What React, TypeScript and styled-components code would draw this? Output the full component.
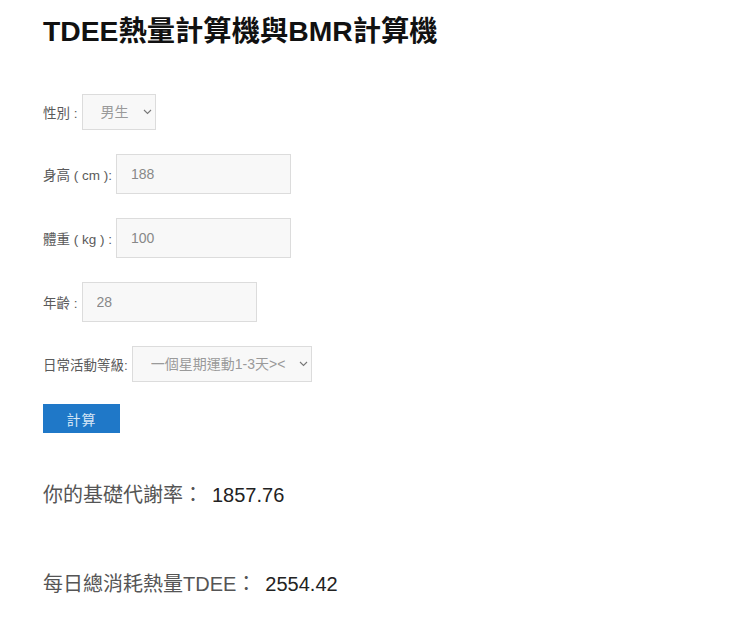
import { useState } from 'react';
import styled, { createGlobalStyle } from 'styled-components';

const GlobalStyle = createGlobalStyle`
  body {
    margin: 0;
    background: #ffffff;
    font-family: "Liberation Sans", "Noto Sans CJK TC", sans-serif;
  }
`;

const StyledPage = styled.div`
  padding: 14px 43px 0;
`;

const StyledTitle = styled.h1`
  margin: 0;
  font-size: 28.3px;
  line-height: 34px;
  font-weight: 700;
  color: #111;
  font-family: "Liberation Sans", "Noto Sans CJK TC", sans-serif;
`;

const StyledForm = styled.form`
  margin-top: 46px;
`;

const StyledRow = styled.div<{ $last?: boolean }>`
  display: flex;
  align-items: center;
  margin-bottom: ${(p) => (p.$last ? '22px' : '24px')};
`;

const StyledLabel = styled.label`
  font-size: 13.5px;
  color: #5a5a5a;
  margin-right: 4px;
  white-space: pre;
`;

const StyledInput = styled.input`
  box-sizing: border-box;
  width: 175px;
  height: 40px;
  padding: 0 14px;
  border: 1px solid #dcdcdc;
  background: #f8f8f8;
  font-size: 14px;
  color: #888;
  font-family: "Liberation Sans", "Noto Sans CJK TC", sans-serif;
  outline: none;
`;

const StyledSelectWrap = styled.span`
  position: relative;
  display: inline-block;
`;

const StyledSelect = styled.select<{ $width: number }>`
  box-sizing: border-box;
  appearance: none;
  width: ${(p) => p.$width}px;
  height: 36px;
  padding: 0 0 0 18px;
  border: 1px solid #dcdcdc;
  border-radius: 0;
  background: #f8f8f8;
  font-size: 14px;
  color: #9a9a9a;
  font-family: "Liberation Sans", "Noto Sans CJK TC", sans-serif;
  outline: none;
`;

const StyledChevron = styled.svg`
  position: absolute;
  right: 4px;
  top: 15px;
  width: 9px;
  height: 6px;
  pointer-events: none;
`;

const StyledButton = styled.button`
  width: 77px;
  height: 29px;
  border: none;
  background: #1f78c8;
  color: #d6e6f6;
  font-size: 14px;
  letter-spacing: 1px;
  font-family: "Liberation Sans", "Noto Sans CJK TC", sans-serif;
  cursor: pointer;
`;

const StyledResult = styled.div<{ $top: number }>`
  margin-top: ${(p) => p.$top}px;
  font-size: 20px;
  line-height: 28px;
  color: #555;
`;

const StyledValue = styled.span`
  color: #222;
  margin-left: 9px;
`;

const Chevron = () => (
  <StyledChevron viewBox="0 0 9 6">
    <path d="M1 1 L4.5 4.5 L8 1" fill="none" stroke="#777" strokeWidth="1.1" />
  </StyledChevron>
);

export default function App() {
  const [gender, setGender] = useState('male');
  const [height, setHeight] = useState('188');
  const [weight, setWeight] = useState('100');
  const [age, setAge] = useState('28');
  const [level, setLevel] = useState('1.375');

  return (
    <StyledPage>
      <GlobalStyle />
      <StyledTitle>TDEE熱量計算機與BMR計算機</StyledTitle>
      <StyledForm onSubmit={(e) => e.preventDefault()}>
        <StyledRow>
          <StyledLabel htmlFor="gender">性別 :</StyledLabel>
          <StyledSelectWrap>
            <StyledSelect
              id="gender"
              $width={74}
              value={gender}
              onChange={(e) => setGender(e.target.value)}
            >
              <option value="male">男生</option>
              <option value="female">女生</option>
            </StyledSelect>
            <Chevron />
          </StyledSelectWrap>
        </StyledRow>
        <StyledRow>
          <StyledLabel htmlFor="height">身高 ( cm ):</StyledLabel>
          <StyledInput id="height" value={height} onChange={(e) => setHeight(e.target.value)} />
        </StyledRow>
        <StyledRow>
          <StyledLabel htmlFor="weight">體重 ( kg ) :</StyledLabel>
          <StyledInput id="weight" value={weight} onChange={(e) => setWeight(e.target.value)} />
        </StyledRow>
        <StyledRow>
          <StyledLabel htmlFor="age">年齡 :</StyledLabel>
          <StyledInput id="age" value={age} onChange={(e) => setAge(e.target.value)} />
        </StyledRow>
        <StyledRow $last>
          <StyledLabel htmlFor="level">日常活動等級:</StyledLabel>
          <StyledSelectWrap>
            <StyledSelect
              id="level"
              $width={180}
              value={level}
              onChange={(e) => setLevel(e.target.value)}
            >
              <option value="1.2">久坐不動</option>
              <option value="1.375">一個星期運動1-3天&gt;&lt;</option>
              <option value="1.55">一個星期運動3-5天</option>
              <option value="1.725">一個星期運動6-7天</option>
            </StyledSelect>
            <Chevron />
          </StyledSelectWrap>
        </StyledRow>
        <StyledButton type="submit">計算</StyledButton>
      </StyledForm>
      <StyledResult $top={48}>
        你的基礎代謝率：<StyledValue>1857.76</StyledValue>
      </StyledResult>
      <StyledResult $top={61}>
        每日總消耗熱量TDEE：<StyledValue>2554.42</StyledValue>
      </StyledResult>
    </StyledPage>
  );
}
